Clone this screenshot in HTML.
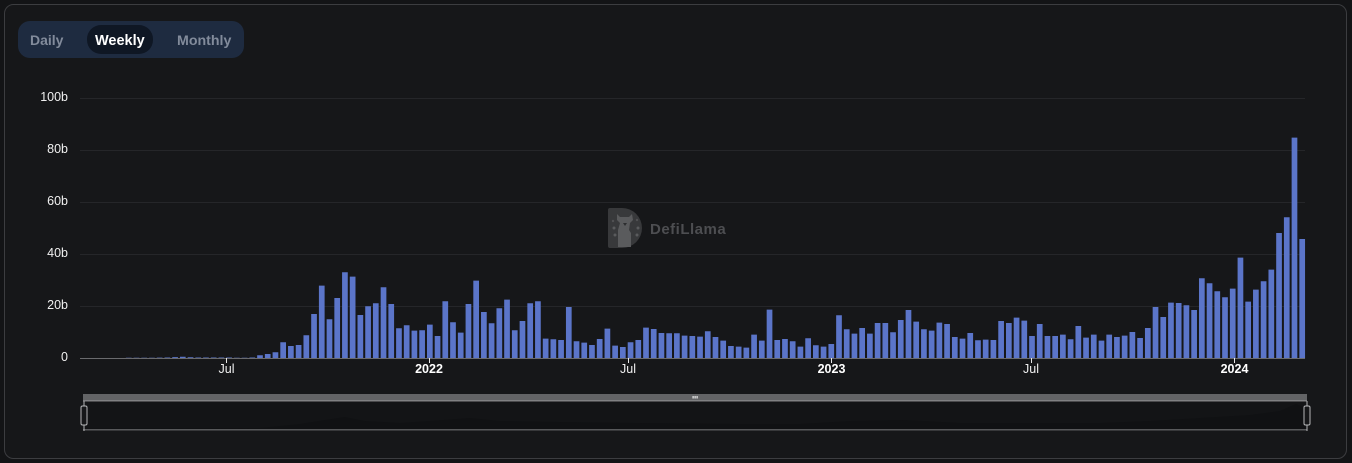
<!DOCTYPE html>
<html lang="en">
<head>
<meta charset="utf-8">
<title>DefiLlama chart</title>
<style>
html,body{margin:0;padding:0;width:1352px;height:463px;overflow:hidden;background:#131416}
svg{display:block}
text{font-family:"Liberation Sans",Arial,sans-serif}
</style>
</head>
<body>
<svg width="1352" height="463" viewBox="0 0 1352 463" xmlns="http://www.w3.org/2000/svg">
<rect x="4.5" y="4.5" width="1342" height="454" rx="9" fill="#161719" stroke="#3c3d40"/>

<!-- tabs -->
<rect x="18" y="21" width="226" height="37" rx="12" fill="#1e2b40"/>
<rect x="87" y="25" width="66" height="29" rx="14" fill="#0f1724"/>
<text x="30" y="45" font-size="14" font-weight="700" fill="#828b9b">Daily</text>
<text x="95" y="45" font-size="14.5" font-weight="700" fill="#ffffff">Weekly</text>
<text x="177" y="45" font-size="14.2" font-weight="700" fill="#828b9b">Monthly</text>

<!-- grid -->
<g stroke="#252629" stroke-width="1">
<path d="M80 98.5H1305M80 150.5H1305M80 202.5H1305M80 254.5H1305M80 306.5H1305"/>
</g>

<!-- watermark -->
<path d="M608 210q0-2 2-2h12a20 20 0 0 1 0 40h-12q-2 0-2-2z" fill="#38393b"/>
<path d="M617 214l3 3h9l3-3 1 6-3 3-1 7 2 3v14h-13v-17l2-7-3-3z" fill="#5a5b5d"/>
<circle cx="614" cy="228" r="1.5" fill="#5a5b5d"/><circle cx="615" cy="235" r="1.5" fill="#5a5b5d"/>
<circle cx="638" cy="228" r="1.5" fill="#5a5b5d"/><circle cx="637" cy="235" r="1.5" fill="#5a5b5d"/>
<circle cx="613" cy="221" r="1.2" fill="#505153"/><circle cx="637" cy="220" r="1.2" fill="#505153"/>
<path d="M623 223h4l-2 3z" fill="#2c2d2f"/>
<text x="650" y="234" font-size="15" font-weight="700" letter-spacing=".5" fill="#4d4e51">DefiLlama</text>

<!-- bars -->
<path fill="#5b75c9" d="M123.89 358.3
m2.02 0v-.5h5.7v.5m2.02 0v-.5h5.7v.5m2.02 0v-.6h5.7v.6m2.02 0v-.6h5.7v.6m2.02 0v-.7h5.7v.7m2.02 0v-.8h5.7v.8m2.02 0v-1.2h5.7v1.2m2.02 0v-1.5h5.7v1.5m2.02 0v-1h5.7v1m2.02 0v-.8h5.7v.8m2.02 0v-.8h5.7v.8m2.02 0v-.8h5.7v.8m2.02 0v-.8h5.7v.8m2.02 0v-.8h5.7v.8m2.02 0v-.6h5.7v.6m2.02 0v-.6h5.7v.6m2.02 0v-.8h5.7v.8
m2.02 0v-3h5.7v3m2.02 0v-4.3h5.7v4.3m2.02 0v-6h5.7v6m2.02 0v-16h5.7v16m2.02 0v-12.3h5.7v12.3m2.02 0v-13.3h5.7v13.3m2.02 0v-23h5.7v23m2.02 0v-44.3h5.7v44.3m2.02 0v-72.7h5.7v72.7m2.02 0v-39h5.7v39m2.02 0v-60.3h5.7v60.3m2.02 0v-86h5.7v86m2.02 0v-81.7h5.7v81.7m2.02 0v-43.3h5.7v43.3m2.02 0v-52h5.7v52m2.02 0v-55h5.7v55m2.02 0v-71h5.7v71m2.02 0v-54.3h5.7v54.3m2.02 0v-30h5.7v30m2.02 0v-33h5.7v33m2.02 0v-27.7h5.7v27.7m2.02 0v-28h5.7v28m2.02 0v-33.7h5.7v33.7m2.02 0v-22.3h5.7v22.3m2.02 0v-57h5.7v57m2.02 0v-36h5.7v36m2.02 0v-25.7h5.7v25.7m2.02 0v-54.3h5.7v54.3m2.02 0v-77.7h5.7v77.7m2.02 0v-46.3h5.7v46.3m2.02 0v-35h5.7v35m2.02 0v-50h5.7v50m2.02 0v-58.7h5.7v58.7m2.02 0v-28h5.7v28m2.02 0v-37.3h5.7v37.3m2.02 0v-55h5.7v55m2.02 0v-57h5.7v57m2.02 0v-19.7h5.7v19.7m2.02 0v-19h5.7v19m2.02 0v-18.3h5.7v18.3m2.02 0v-51.3h5.7v51.3m2.02 0v-17h5.7v17
m2.02 0v-15.7h5.7v15.7m2.02 0v-13.3h5.7v13.3m2.02 0v-19.3h5.7v19.3m2.02 0v-29.7h5.7v29.7m2.02 0v-12.7h5.7v12.7m2.02 0v-11.3h5.7v11.3m2.02 0v-16h5.7v16m2.02 0v-18.3h5.7v18.3m2.02 0v-30.7h5.7v30.7m2.02 0v-29.3h5.7v29.3m2.02 0v-25.3h5.7v25.3m2.02 0v-25h5.7v25m2.02 0v-25h5.7v25m2.02 0v-22.7h5.7v22.7m2.02 0v-22.3h5.7v22.3m2.02 0v-21.7h5.7v21.7m2.02 0v-27h5.7v27m2.02 0v-21.3h5.7v21.3m2.02 0v-17.7h5.7v17.7m2.02 0v-12.3h5.7v12.3m2.02 0v-11.7h5.7v11.7m2.02 0v-10.7h5.7v10.7m2.02 0v-23.7h5.7v23.7m2.02 0v-17.7h5.7v17.7m2.02 0v-48.7h5.7v48.7m2.02 0v-18.3h5.7v18.3m2.02 0v-19.3h5.7v19.3m2.02 0v-17h5.7v17m2.02 0v-11.7h5.7v11.7m2.02 0v-20h5.7v20m2.02 0v-13h5.7v13m2.02 0v-11.7h5.7v11.7m2.02 0v-14.3h5.7v14.3m2.02 0v-43h5.7v43m2.02 0v-29h5.7v29m2.02 0v-24.7h5.7v24.7
m2.02 0v-30.3h5.7v30.3m2.02 0v-24.7h5.7v24.7m2.02 0v-35.3h5.7v35.3m2.02 0v-35.3h5.7v35.3m2.02 0v-26h5.7v26m2.02 0v-38.3h5.7v38.3m2.02 0v-48.3h5.7v48.3m2.02 0v-36.7h5.7v36.7m2.02 0v-29h5.7v29m2.02 0v-27.7h5.7v27.7m2.02 0v-35.7h5.7v35.7m2.02 0v-34.3h5.7v34.3m2.02 0v-21.3h5.7v21.3m2.02 0v-19.7h5.7v19.7m2.02 0v-25.3h5.7v25.3m2.02 0v-18h5.7v18m2.02 0v-18.7h5.7v18.7m2.02 0v-18.3h5.7v18.3m2.02 0v-37.3h5.7v37.3m2.02 0v-35.3h5.7v35.3m2.02 0v-40.7h5.7v40.7m2.02 0v-37.7h5.7v37.7m2.02 0v-22.3h5.7v22.3m2.02 0v-34.3h5.7v34.3m2.02 0v-22.3h5.7v22.3m2.02 0v-22.3h5.7v22.3m2.02 0v-23.7h5.7v23.7m2.02 0v-19h5.7v19m2.02 0v-32.3h5.7v32.3m2.02 0v-20.7h5.7v20.7m2.02 0v-23.7h5.7v23.7m2.02 0v-17.7h5.7v17.7m2.02 0v-23.7h5.7v23.7m2.02 0v-21.3h5.7v21.3m2.02 0v-22.7h5.7v22.7m2.02 0v-26.3h5.7v26.3m2.02 0v-20.3h5.7v20.3m2.02 0v-30.3h5.7v30.3
m2.02 0v-51.3h5.7v51.3m2.02 0v-41.3h5.7v41.3m2.02 0v-55.7h5.7v55.7m2.02 0v-55.3h5.7v55.3m2.02 0v-53h5.7v53m2.02 0v-48.3h5.7v48.3m2.02 0v-80h5.7v80m2.02 0v-75h5.7v75m2.02 0v-67h5.7v67m2.02 0v-61h5.7v61m2.02 0v-69.7h5.7v69.7m2.02 0v-100.7h5.7v100.7m2.02 0v-56.7h5.7v56.7m2.02 0v-68.7h5.7v68.7m2.02 0v-77h5.7v77m2.02 0v-88.7h5.7v88.7m2.02 0v-125.3h5.7v125.3m2.02 0v-141h5.7v141m2.02 0v-220.7h5.7v220.7m2.02 0v-119.3h5.7v119.3"/>

<!-- axis -->
<path d="M80 358.5H1305" stroke="#6a6b6e" stroke-width="1"/>
<path d="M226.5 358v5M429.5 358v5M628.5 358v5M831.5 358v5M1031.5 358v5M1234.5 358v5" stroke="#e8e8e8" stroke-width="1"/>

<!-- y labels -->
<g font-size="12.5" fill="#f0f0f0" text-anchor="end">
<text x="68" y="101">100b</text>
<text x="68" y="153">80b</text>
<text x="68" y="205">60b</text>
<text x="68" y="257">40b</text>
<text x="68" y="309">20b</text>
<text x="68" y="361">0</text>
</g>
<!-- x labels -->
<g font-size="12.5" fill="#f0f0f0" text-anchor="middle">
<text x="226.5" y="373">Jul</text>
<text x="429" y="373" font-weight="700" fill="#fff">2022</text>
<text x="628" y="373">Jul</text>
<text x="831.5" y="373" font-weight="700" fill="#fff">2023</text>
<text x="1031" y="373">Jul</text>
<text x="1234.5" y="373" font-weight="700" fill="#fff">2024</text>
</g>

<!-- data zoom slider -->
<rect x="83" y="401" width="1224" height="28" fill="#131416"/>
<path d="M83 429V428.5L260 428 300 424 325 420 345 417 365 421 400 423 430 421 470 418 500 421 560 422 640 423 740 424 800 424 850 421 905 420 960 423 1030 423 1100 423 1150 421 1200 418 1250 415 1280 411 1296 404 1306 408V429Z" fill="#101113"/>
<rect x="83" y="394" width="1224" height="6" fill="#636466"/>
<rect x="83" y="400" width="1224" height="1.5" fill="#808183"/>
<rect x="83" y="429" width="1224" height="1.5" fill="#58595b"/>
<rect x="692.5" y="396" width="1.2" height="2.5" fill="#eee"/>
<rect x="694.5" y="396" width="1.2" height="2.5" fill="#eee"/>
<rect x="696.5" y="396" width="1.2" height="2.5" fill="#eee"/>
<g stroke="#b5b6b8" fill="#161719">
<path d="M84 401V431" stroke-width="1"/>
<rect x="81" y="406" width="6" height="19" rx="1.5" stroke-width="1"/>
<path d="M1307 401V431" stroke-width="1"/>
<rect x="1304" y="406" width="6" height="19" rx="1.5" stroke-width="1"/>
</g>
</svg>
</body>
</html>
